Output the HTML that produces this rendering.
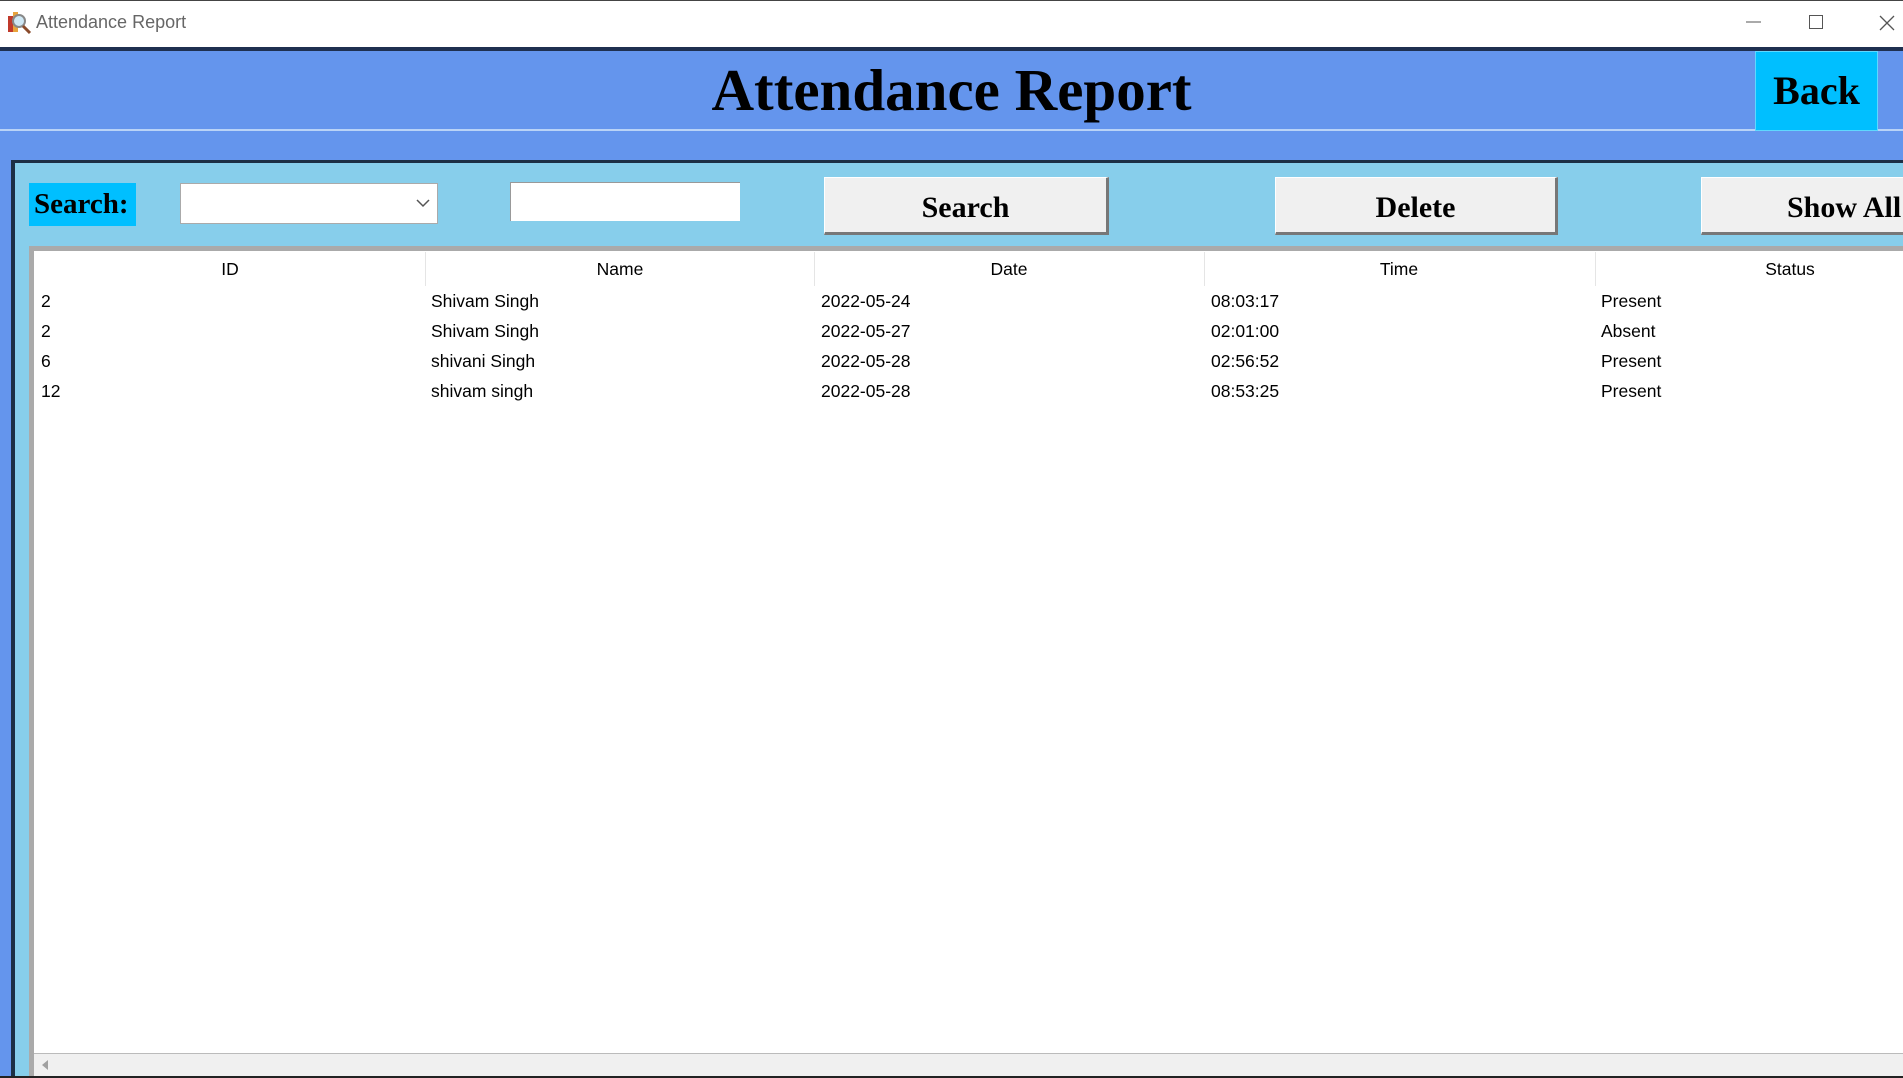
<!DOCTYPE html>
<html><head><style>
*{margin:0;padding:0;box-sizing:border-box}
body{width:1903px;height:1078px;overflow:hidden;background:#6495ED;position:relative;font-family:"Liberation Sans",sans-serif}
.a{position:absolute}
.tb{left:0;top:0;width:1903px;height:47px;background:#fff;border-top:1px solid #444}
.tt{left:36px;top:12px;font-size:18px;color:#666}
.title{left:0;width:1903px;top:56px;text-align:center;font:bold 59px "Liberation Serif",serif;color:#000}
.btn{background:#f0f0f0;border:1px solid #fff;border-right:3px solid #777;border-bottom:3px solid #777;font:bold 30px "Liberation Serif",serif;text-align:center;line-height:60px;color:#000}
.row{position:absolute;font-size:17.5px;color:#000}
.hd{position:absolute;top:259px;font-size:17.5px;color:#000;text-align:center;width:390px}
.sep{position:absolute;top:252px;width:1px;height:34px;background:#e5e5e5}
</style></head><body>
<div class="a tb"></div>
<svg class="a" style="left:6px;top:10px" width="26" height="26" viewBox="0 0 26 26"><rect x="2" y="6" width="5" height="16" fill="#c0392b"/><rect x="7" y="2" width="5" height="20" fill="#e8a33c"/><circle cx="13" cy="11" r="6" fill="#cfe8f5" stroke="#888" stroke-width="2"/><line x1="17" y1="16" x2="24" y2="23" stroke="#8a4b2b" stroke-width="3"/></svg>
<div class="a tt">Attendance Report</div>
<svg class="a" style="left:1738px;top:13px" width="160" height="20"><line x1="8" y1="9" x2="23" y2="9" stroke="#555"/><rect x="71.5" y="2.5" width="13" height="13" fill="none" stroke="#555"/><path d="M142 3 L156 17 M156 3 L142 17" stroke="#555" stroke-width="1.3"/></svg>
<div class="a" style="left:0;top:47px;width:1903px;height:4px;background:#1f3050"></div>
<div class="a" style="left:0;top:129px;width:1903px;height:2px;background:#b9d3f7"></div>
<div class="a title">Attendance Report</div>
<div class="a" style="left:1755px;top:51px;width:123px;height:80px;background:#00BFFF;border:1px solid #5fd8ff;font:bold 40px 'Liberation Serif',serif;text-align:center;line-height:78px">Back</div>
<div class="a" style="left:11px;top:160px;width:1892px;height:918px;background:#87CEEB;border-left:4px solid #1c2f45;border-top:3px solid #1c2f45"></div>
<div class="a" style="left:29px;top:183px;width:107px;height:43px;background:#00BFFF;font:bold 29px 'Liberation Serif',serif;line-height:43px;padding-left:5px">Search:</div>
<div class="a" style="left:180px;top:183px;width:258px;height:41px;background:#fff;border:1px solid #aaa"></div>
<svg class="a" style="left:416px;top:198px" width="14" height="10"><path d="M1 2 L7 8 L13 2" stroke="#555" fill="none" stroke-width="1.5"/></svg>
<div class="a" style="left:510px;top:182px;width:230px;height:39px;background:#fff;border-top:1px solid #999;border-left:1px solid #999"></div>
<div class="a btn" style="left:824px;top:177px;width:285px;height:58px">Search</div>
<div class="a btn" style="left:1275px;top:177px;width:283px;height:58px">Delete</div>
<div class="a btn" style="left:1701px;top:177px;width:230px;height:58px;text-align:left;padding-left:85px">Show All</div>
<div class="a" style="left:29px;top:246px;width:1874px;height:830px;background:#fff;border-left:5px solid #aaa;border-top:5px solid #aaa"></div>
<div class="a" style="left:34px;top:1053px;width:1869px;height:23px;background:#f0f0f0;border-top:1px solid #bbb"></div>
<svg class="a" style="left:40px;top:1059px" width="10" height="12"><path d="M8 1 L2 6 L8 11Z" fill="#a0a0a0"/></svg>
<div class="a" style="left:0;top:1076px;width:1903px;height:2px;background:#222"></div>
<div class="sep" style="left:425px"></div><div class="sep" style="left:814px"></div><div class="sep" style="left:1204px"></div><div class="sep" style="left:1595px"></div>
<div class="hd" style="left:35px">ID</div><div class="hd" style="left:425px">Name</div><div class="hd" style="left:814px">Date</div><div class="hd" style="left:1204px">Time</div><div class="hd" style="left:1595px">Status</div>
<div class="row" style="left:41px;top:286px;line-height:30px">2<br>2<br>6<br>12</div>
<div class="row" style="left:431px;top:286px;line-height:30px">Shivam Singh<br>Shivam Singh<br>shivani Singh<br>shivam singh</div>
<div class="row" style="left:821px;top:286px;line-height:30px">2022-05-24<br>2022-05-27<br>2022-05-28<br>2022-05-28</div>
<div class="row" style="left:1211px;top:286px;line-height:30px">08:03:17<br>02:01:00<br>02:56:52<br>08:53:25</div>
<div class="row" style="left:1601px;top:286px;line-height:30px">Present<br>Absent<br>Present<br>Present</div>
</body></html>
